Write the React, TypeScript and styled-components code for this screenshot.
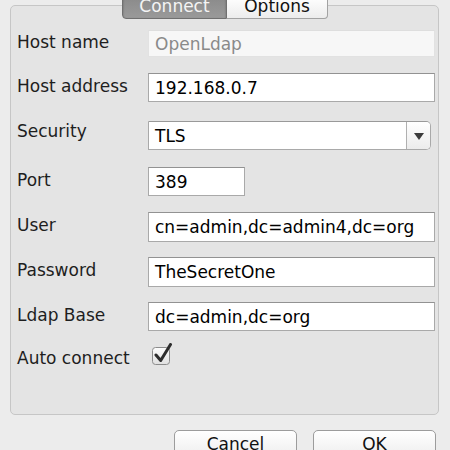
import React from "react";
import styled, { createGlobalStyle } from "styled-components";

const Global = createGlobalStyle`
  html, body { margin: 0; padding: 0; background: #ececec; }
  body { font-family: "DejaVu Sans", "Liberation Sans", sans-serif; font-size: 17px; color: #1c1c1c; }
  #root { width: 450px; height: 450px; overflow: hidden; }
`;

const Page = styled.div`
  display: flex;
  flex-direction: column;
  width: 450px;
  height: 450px;
  overflow: hidden;
  & > * { flex: none; }
`;

const TabBar = styled.div`
  position: relative;
  z-index: 1;
  display: flex;
  justify-content: center;
  margin-top: -4px;
  margin-bottom: -14px;
  height: 23px;
`;

const Tab = styled.div<{ $active?: boolean; $first?: boolean }>`
  box-sizing: border-box;
  height: 23px;
  width: ${(p) => (p.$first ? "105px" : "101px")};
  display: flex;
  align-items: center;
  justify-content: center;
  padding-bottom: 3px;
  font-size: 17px;
  border: 1px solid ${(p) => (p.$active ? "#707070" : "#a2a2a2")};
  border-left-width: ${(p) => (p.$first ? "1px" : "0")};
  border-radius: ${(p) => (p.$first ? "0 0 0 4px" : "0 0 4px 0")};
  background: ${(p) =>
    p.$active
      ? "linear-gradient(#8a8a8a, #9a9a9a)"
      : "linear-gradient(#ffffff, #ececec)"};
  color: ${(p) => (p.$active ? "#f4f4f4" : "#111")};
  box-shadow: ${(p) => (p.$active ? "inset 0 1px 2px rgba(0,0,0,0.35)" : "none")};
`;

const Panel = styled.div`
  box-sizing: border-box;
  margin: 0 11px 0 10px;
  height: 410px;
  border: 1px solid #c6c6c6;
  border-radius: 5px;
  background: #e4e4e4;
  padding: 0 3px 0 6px;
  display: flex;
  flex-direction: column;
`;

const Row = styled.div<{ $space: number; $h: number }>`
  display: flex;
  align-items: center;
  margin-top: ${(p) => p.$space}px;
  height: ${(p) => p.$h}px;
`;

const Label = styled.div<{ $lift?: number }>`
  width: 131px;
  flex: none;
  font-size: 17px;
  color: #1e1e1e;
  margin-top: ${(p) => -(p.$lift ?? 4)}px;
  white-space: nowrap;
`;

const Input = styled.div<{ $disabled?: boolean; $w?: number }>`
  box-sizing: border-box;
  height: 100%;
  ${(p) => (p.$w ? `width: ${p.$w}px;` : "flex: 1;")}
  display: flex;
  align-items: center;
  padding-left: 6px;
  background: ${(p) => (p.$disabled ? "#f7f7f7" : "#ffffff")};
  border: 1px solid ${(p) => (p.$disabled ? "#e2e2e2" : "#a9a9a9")};
  border-top-color: ${(p) => (p.$disabled ? "#dedede" : "#929292")};
  color: ${(p) => (p.$disabled ? "#8a8a8a" : "#000")};
  font-size: 17px;
  white-space: nowrap;
  overflow: hidden;
`;

const Combo = styled.div`
  box-sizing: border-box;
  height: 100%;
  width: 283px;
  display: flex;
  border: 1px solid #a9a9a9;
  border-top-color: #999;
  border-radius: 0 5px 5px 0;
  background: #fff;
  overflow: hidden;
`;

const ComboText = styled.div`
  flex: 1;
  display: flex;
  align-items: center;
  padding-left: 6px;
  font-size: 17px;
  color: #000;
`;

const ComboButton = styled.div`
  width: 23px;
  border-left: 1px solid #b0b0b0;
  background: linear-gradient(#ffffff, #ececec);
  display: flex;
  align-items: center;
  justify-content: center;
`;

const Arrow = styled.div`
  width: 0;
  height: 0;
  border-left: 5px solid transparent;
  border-right: 5px solid transparent;
  border-top: 7px solid #3c3c3c;
  margin-top: 1px;
`;

const CheckWrap = styled.div`
  width: 22px;
  height: 24px;
  margin-left: 4px;
  margin-top: -4px;
`;

const ButtonBar = styled.div`
  display: flex;
  justify-content: flex-end;
  gap: 16px;
  margin-top: 15px;
  padding-right: 14px;
`;

const Button = styled.div`
  box-sizing: border-box;
  width: 123px;
  height: 26px;
  border: 1px solid #9c9c9c;
  border-radius: 5px;
  background: linear-gradient(#ffffff, #efefef);
  display: flex;
  align-items: center;
  justify-content: center;
  font-size: 17px;
  color: #111;
  padding-top: 2px;
`;

const CheckBox = () => (
  <CheckWrap>
    <svg width="22" height="24" viewBox="0 0 22 24">
      <defs>
        <linearGradient id="cbg" x1="0" y1="0" x2="0" y2="1">
          <stop offset="0" stopColor="#fdfdfd" />
          <stop offset="1" stopColor="#e0e0e0" />
        </linearGradient>
      </defs>
      <rect x="0.5" y="4.5" width="17" height="17" rx="3" fill="url(#cbg)" stroke="#8c8c8c" />
      <path d="M4 12 L8.7 17.5 L18.5 1.5" fill="none" stroke="#2e2e2e" strokeWidth="3" strokeLinecap="round" strokeLinejoin="round" />
    </svg>
  </CheckWrap>
);

export default function App() {
  return (
    <Page>
      <Global />
      <TabBar>
        <Tab $first $active>Connect</Tab>
        <Tab>Options</Tab>
      </TabBar>
      <Panel>
        <Row $space={24} $h={27}>
          <Label $lift={3}>Host name</Label>
          <Input $disabled>OpenLdap</Input>
        </Row>
        <Row $space={16} $h={29}>
          <Label>Host address</Label>
          <Input>192.168.0.7</Input>
        </Row>
        <Row $space={19} $h={29}>
          <Label $lift={10}>Security</Label>
          <Combo>
            <ComboText>TLS</ComboText>
            <ComboButton>
              <Arrow />
            </ComboButton>
          </Combo>
        </Row>
        <Row $space={17} $h={29}>
          <Label>Port</Label>
          <Input $w={97}>389</Input>
        </Row>
        <Row $space={16} $h={30}>
          <Label>User</Label>
          <Input>cn=admin,dc=admin4,dc=org</Input>
        </Row>
        <Row $space={15} $h={30}>
          <Label>Password</Label>
          <Input>TheSecretOne</Input>
        </Row>
        <Row $space={15} $h={29}>
          <Label>Ldap Base</Label>
          <Input>dc=admin,dc=org</Input>
        </Row>
        <Row $space={17} $h={18}>
          <Label $lift={-2}>Auto connect</Label>
          <CheckBox />
        </Row>
      </Panel>
      <ButtonBar>
        <Button>Cancel</Button>
        <Button>OK</Button>
      </ButtonBar>
    </Page>
  );
}
